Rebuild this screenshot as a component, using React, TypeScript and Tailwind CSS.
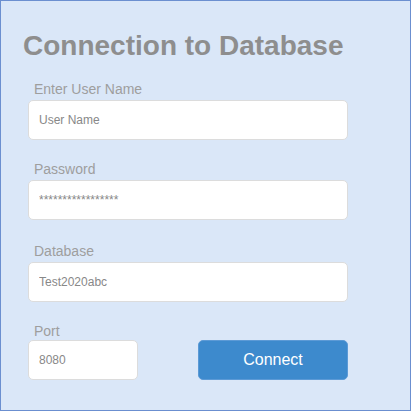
import React from "react";

const inputCls =
  "block h-[40px] rounded-[5px] border border-[#dcdcdc] bg-white pl-[10px] text-[12px] text-[#888888] outline-none";

function Label({ children, className = "" }: { children: React.ReactNode; className?: string }) {
  return (
    <div className={"pl-[6px] text-[14px] leading-[17px] text-[#9e9e9e] " + className}>{children}</div>
  );
}

export default function App() {
  return (
    <div
      className="w-[411px] h-[411px] border border-[#6b8fd0] bg-[#dae7f8] pl-[27px] pt-[29px] flex flex-col"
      style={{ fontFamily: '"Liberation Sans", Arial, sans-serif' }}
    >
      <h1 className="ml-[-5px] text-[28px] leading-[32px] font-bold text-[#8e8e8e]">Connection to Database</h1>

      <Label className="mt-[19px]">Enter User Name</Label>
      <input readOnly value="User Name" className={inputCls + " mt-[2px] w-[320px]"} />

      <Label className="mt-[21px]">Password</Label>
      <input readOnly value="*****************" className={inputCls + " mt-[2px] w-[320px]"} />

      <Label className="mt-[23px]">Database</Label>
      <input readOnly value="Test2020abc" className={inputCls + " mt-[2px] w-[320px]"} />

      <div className="mt-[21px] flex w-[320px] items-end justify-between">
        <div className="flex flex-col">
          <Label>Port</Label>
          <input readOnly value="8080" className={inputCls + " mt-0 w-[110px]"} />
        </div>
        <button className="h-[40px] w-[150px] rounded-[5px] border border-[#5c9ad6] bg-[#3d8acd] text-[16px] text-white">
          Connect
        </button>
      </div>
    </div>
  );
}
